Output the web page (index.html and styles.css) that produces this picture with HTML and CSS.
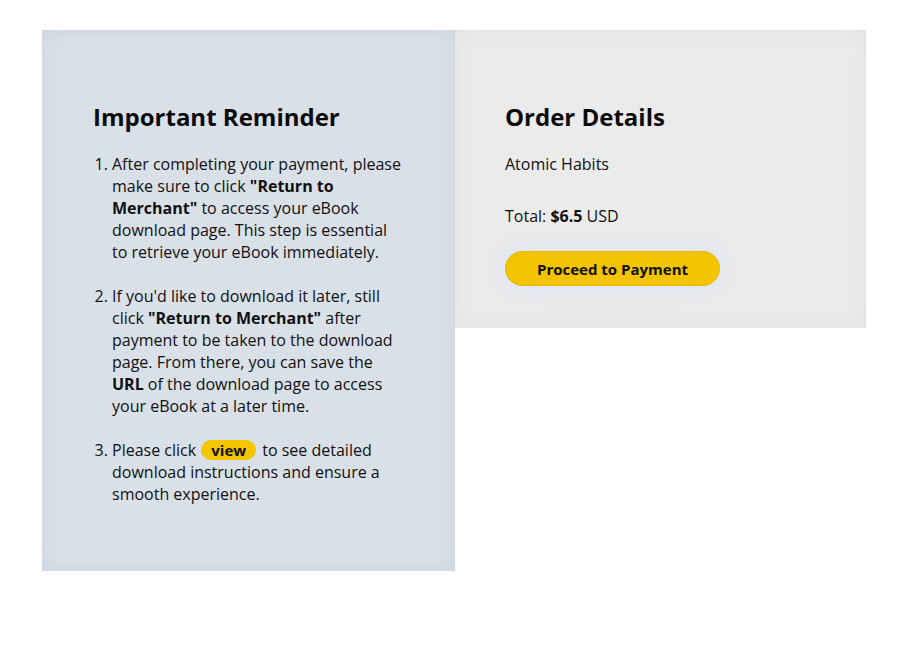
FILE: index.html
```html
<!DOCTYPE html>
<html lang="en">
<head>
<meta charset="utf-8">
<title>Order</title>
<link rel="stylesheet" href="styles.css">
</head>
<body>
<main class="layout">
  <section class="panel reminder">
    <h2 class="title">Important Reminder</h2>
    <ol class="steps">
      <li>After completing your payment, please make sure to click <strong>"Return to Merchant"</strong> to access your eBook download page. This step is essential to retrieve your eBook immediately.</li>
      <li>If you'd like to download it later, still click <strong>"Return to Merchant"</strong> after payment to be taken to the download page. From there, you can save the <strong>URL</strong> of the download page to access your eBook at a later time.</li>
      <li>Please click <a class="pill" href="#">view</a> to see detailed download instructions and ensure a smooth experience.</li>
    </ol>
  </section>
  <section class="panel order">
    <h2 class="title">Order Details</h2>
    <p class="product">Atomic Habits</p>
    <p class="total">Total: <strong>$6.5</strong> USD</p>
    <button class="pay" type="button">Proceed to Payment</button>
  </section>
</main>
</body>
</html>
```

FILE: styles.css
```css
html, body {
  margin: 0;
  padding: 0;
  background: #ffffff;
}

body {
  font-family: "Open Sans", "Noto Sans", sans-serif;
  color: #111111;
  font-size: 16px;
}

.layout {
  display: flex;
  align-items: flex-start;
  margin: 30px 0 0 42px;
}

.panel {
  box-sizing: border-box;
  padding: 50px 50px 50px 51px;
}

.reminder {
  width: 413px;
  height: 541px;
  background: #d9e0e8;
  box-shadow: inset 0 0 18px rgba(180, 190, 205, 0.35);
}

.order {
  width: 411px;
  height: 298px;
  background: #ebebeb;
  box-shadow: inset 0 0 18px rgba(205, 205, 210, 0.35);
  padding-left: 50px;
}

.title {
  font-size: 24px;
  font-weight: 700;
  line-height: 32px;
  margin: 21px 0 20px;
  color: #0a0a0a;
}

.steps {
  margin: 0;
  padding-left: 19px;
  line-height: 22px;
}

.steps li {
  margin-bottom: 22px;
}

.steps li:last-child {
  margin-bottom: 0;
}

.steps strong {
  font-weight: 700;
}

.pill {
  display: inline-block;
  vertical-align: top;
  margin: 1px 2px 0 1px;
  background: #f3c600;
  color: #111;
  font-weight: 700;
  font-size: 15px;
  line-height: 20px;
  padding: 0 10px;
  border-radius: 10px;
  text-decoration: none;
}

.product {
  margin: 0;
  line-height: 22px;
}

.total {
  margin: 30px 0 0;
  line-height: 22px;
}

.pay {
  display: block;
  margin-top: 24px;
  width: 215px;
  height: 35px;
  border: 1px solid #e3b700;
  border-radius: 18px;
  background: #f2c400;
  color: #111;
  font-family: "Open Sans", "Noto Sans", sans-serif;
  font-size: 15px;
  font-weight: 700;
  box-shadow: 0 0 22px rgba(210, 222, 255, 0.7);
  cursor: pointer;
}
```
